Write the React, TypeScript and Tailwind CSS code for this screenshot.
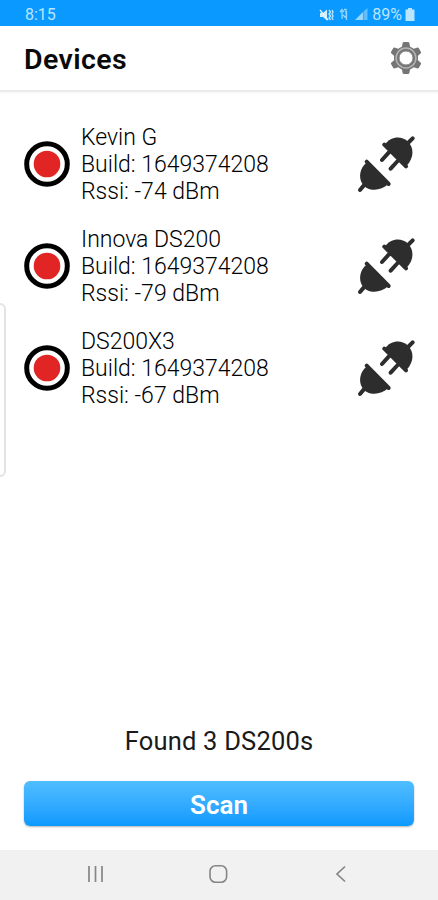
interface Device {
  name: string
  build: string
  rssi: number
}

const DEVICES: Device[] = [
  { name: 'Kevin G', build: '1649374208', rssi: -74 },
  { name: 'Innova DS200', build: '1649374208', rssi: -79 },
  { name: 'DS200X3', build: '1649374208', rssi: -67 },
]

const GEAR_TEETH = [0, 60, 120, 180, 240, 300]

function StatusBar() {
  return (
    <div className="flex h-[26px] shrink-0 items-center justify-between bg-[#0a99ff] pr-[23px] pl-[25px] pt-[3px] text-[16px] leading-5 text-[#b9e5ff]">
      <span>8:15</span>
      <div className="flex items-center">
        {/* mute + vibrate */}
        <svg className="h-[14px] w-[15px]" viewBox="0 0 15 14" fill="none" stroke="currentColor">
          <path d="M1 5h3l4-3.500v11L4 9H1z" fill="#d3eeff" stroke="none" />
          <path d="M1 2l8 10" stroke="#e4f5ff" strokeWidth="1.3" />
          <path d="M10 2l1.500 2L10 6l1.500 2L10 10l1.500 2M13 2l1 2-1 2 1 2-1 2 1 2" strokeWidth="1.4" />
        </svg>
        {/* data activity */}
        <svg className="ml-[5px] h-[14px] w-[9px]" viewBox="0 0 9 14" fill="none" stroke="currentColor" strokeWidth="1.3" opacity="0.8">
          <path d="M1 4l2-2.500L5 4M3 2v9M5 1.500h2v5M4 7l2 2 2-2M7.500 3v9" />
        </svg>
        <svg className="ml-[7px] h-[13px] w-[13px]" viewBox="0 0 13 13" fill="currentColor">
          <path d="M0 12L8 4v8z" opacity="0.8" />
          <path d="M8.500 3.500L12.500 0v12h-4z" opacity="0.5" />
        </svg>
        <span className="ml-[4px]">89%</span>
        <svg className="ml-[3px] h-[13px] w-[10px]" viewBox="0 0 10 13" fill="currentColor">
          <path d="M3 0h4v1.500h2.500V13H.5V1.500H3z" />
        </svg>
      </div>
    </div>
  )
}

function GearIcon() {
  return (
    <svg className="size-[34px]" viewBox="-17 -17 34 34">
      {GEAR_TEETH.map((angle) => (
        <path key={angle} d="M-4.500 -9L-3.300 -15.200Q-3 -16 -2 -16H2Q3 -16 3.300 -15.200L4.500 -9z" fill="#757575" transform={`rotate(${angle})`} />
      ))}
      <circle r="12" fill="#757575" />
      <circle r="9.900" fill="none" stroke="#b5b5b5" strokeWidth="1.500" />
      <circle r="7" fill="#fff" stroke="#858585" strokeWidth="1" />
    </svg>
  )
}

function RecordIcon() {
  return (
    <svg className="size-[46px] shrink-0" viewBox="0 0 46 46">
      <circle cx="23" cy="23" r="20.300" fill="#fff" stroke="#000" strokeWidth="5" />
      <circle cx="23" cy="23" r="13.300" fill="#e12524" />
    </svg>
  )
}

function PlugIcon() {
  return (
    <svg className="size-[58px]" viewBox="36 30 174 174" fill="#2d2d2d" stroke="#2d2d2d" strokeLinecap="round">
      <path d="M66 112C44 128 40 158 52 176C66 199 105 201 130 177z" stroke="none" />
      <path d="M65 110L131 177M56 182L45 195" strokeWidth="12" />
      <path d="M118 60C138 32 169 32 187 48C208 67 208 99 184 123z" stroke="none" />
      <path d="M118 59L183 124M189 54L203 40M131 83L111 105M158 108L137 131" strokeWidth="12" />
    </svg>
  )
}

function DeviceRow({ device }: { device: Device }) {
  return (
    <li className="flex h-[102px] items-center pr-[23px] pl-6">
      <RecordIcon />
      <div className="ml-[11px] flex-1 pt-px text-[23px] leading-[27px] font-light whitespace-nowrap text-black">
        <p>{device.name}</p>
        <p>Build: {device.build}</p>
        <p>Rssi: {device.rssi} dBm</p>
      </div>
      <button aria-label="Connect">
        <PlugIcon />
      </button>
    </li>
  )
}

function NavBar() {
  return (
    <nav className="flex h-[50px] shrink-0 items-center justify-between bg-[#f1f1f1] px-[85px] pb-[2px]">
      <svg className="h-5 w-5" viewBox="0 0 20 20" fill="none" stroke="#858585" strokeWidth="1.700">
        <path d="M4 2v16M10.500 2v16M17 2v16" />
      </svg>
      <svg className="h-5 w-5" viewBox="0 0 20 20" fill="none" stroke="#858585" strokeWidth="1.600">
        <rect x="1" y="1.700" width="16.600" height="16.600" rx="5.500" />
      </svg>
      <svg className="h-5 w-5" viewBox="0 0 20 20" fill="none" stroke="#858585" strokeWidth="1.700">
        <path d="M12 2.500L4 10l8 7.500" />
      </svg>
    </nav>
  )
}

export default function App() {
  return (
    <div className="relative flex h-[900px] w-[438px] flex-col overflow-hidden bg-white font-[Roboto,'Liberation_Sans',sans-serif]">
      <StatusBar />
      <header className="flex h-[66px] shrink-0 items-center justify-between border-b-2 border-[#ebebeb] pr-[15px] pl-6 shadow-[0_1px_2px_rgba(0,0,0,0.04)]">
        <h1 className="pt-[3px] text-[28.5px] leading-8 font-semibold tracking-[0.4px] text-[#0a0a0a]">Devices</h1>
        <button aria-label="Settings">
          <GearIcon />
        </button>
      </header>

      <main className="flex flex-1 flex-col pt-[21px]">
        <ul>
          {DEVICES.map((device) => (
            <DeviceRow key={device.name} device={device} />
          ))}
        </ul>
        <div className="mt-auto px-6 pb-6">
          <p className="mb-[24px] text-center text-[25.5px] leading-8 tracking-[0.2px] text-[#1a1a1a]">Found {DEVICES.length} DS200s</p>
          <button className="block h-[45px] w-full rounded-[6px] bg-linear-to-b from-[#4fbeff] to-[#0a99ff] pt-[2px] text-[26px] leading-8 font-semibold text-white shadow-[0_1px_2px_rgba(0,0,0,0.3)]">
            Scan
          </button>
        </div>
      </main>
      <NavBar />

      {/* edge panel handle, floats over the list */}
      <div className="absolute top-[303px] -left-2 h-[174px] w-[14px] rounded-[6px] border-2 border-[#e3e3e3] bg-white" />
    </div>
  )
}
